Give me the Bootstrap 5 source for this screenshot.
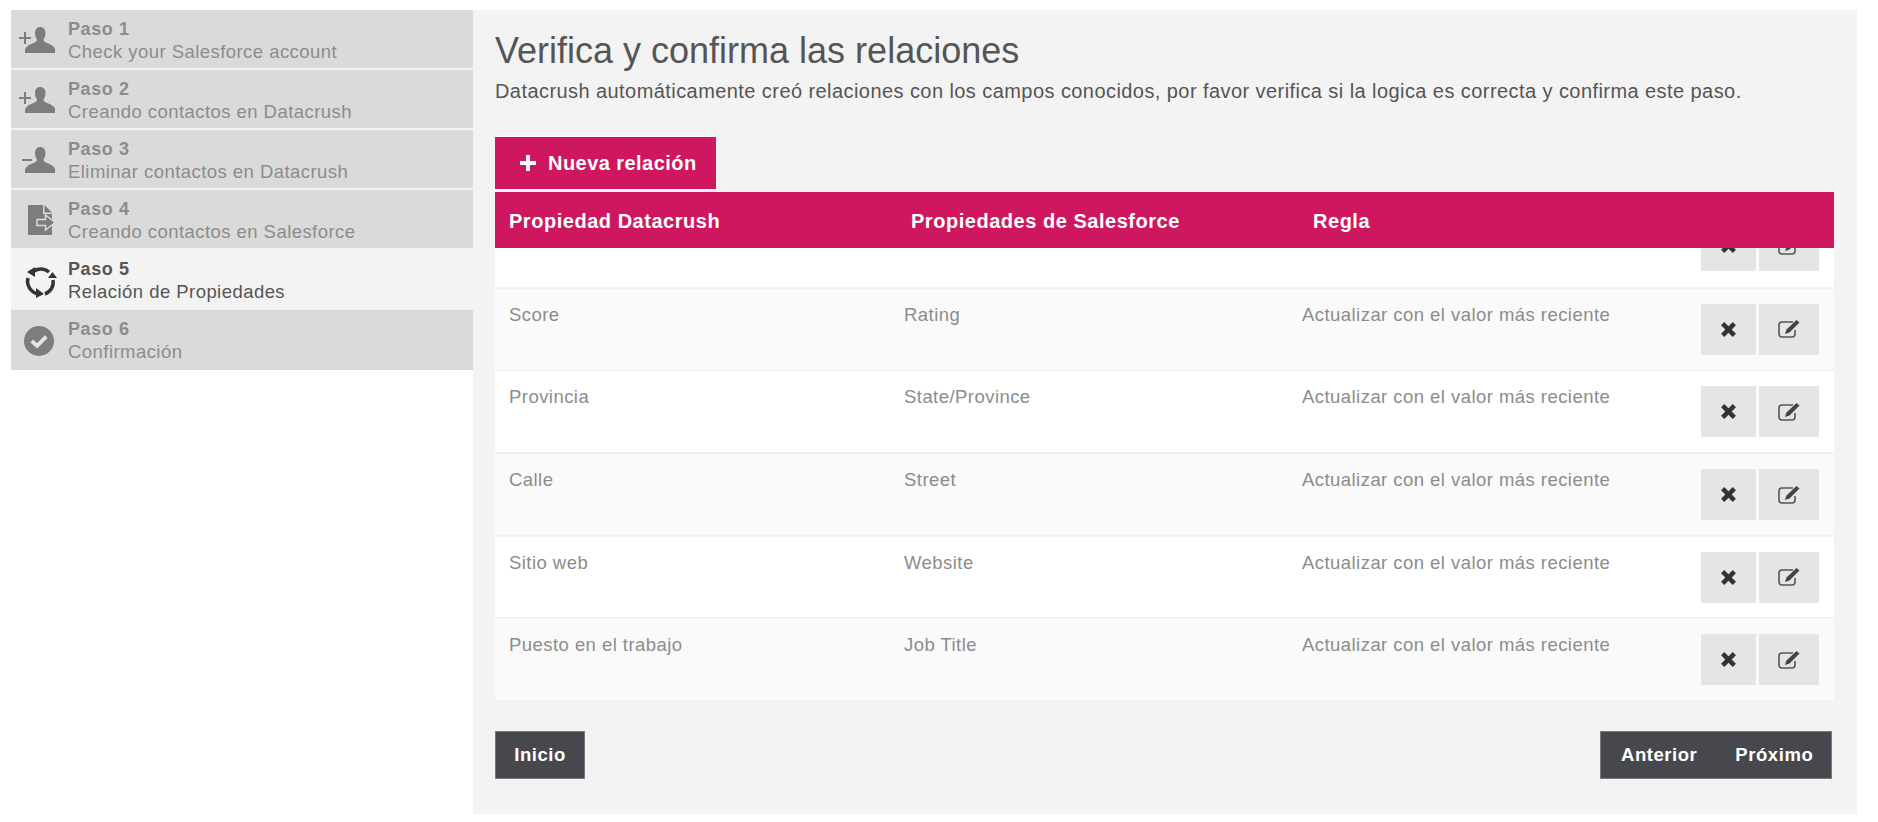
<!DOCTYPE html>
<html lang="es">
<head>
<meta charset="utf-8">
<title>Relaciones</title>
<link href="https://cdn.jsdelivr.net/npm/bootstrap@5.3.0/dist/css/bootstrap.min.css" rel="stylesheet">
<style>
body{font-family:"Liberation Sans",Arial,sans-serif;background:#fff;padding:10px 21px 0 11px;font-size:18.5px;letter-spacing:.45px;height:822px;overflow:hidden}
.side-col{width:462px;flex:none}
.step-row{height:60px;background:#dadada;border-bottom:2px solid #f3f3f3;color:#8c8c8c;padding:8px 0 0 0;line-height:23px}
.step-row:last-child{border-bottom:0}
.step-row.is-on{background:#f3f3f3;color:#555}
.step-icon{width:57px;flex:none;display:flex;padding:9px 0 0 8px}
.step-icon.alt-doc{padding:7px 0 0 17px}
.step-icon.alt-ring{padding:7px 0 0 13px}
.step-icon.alt-ok{padding:8px 0 0 13px}
.step-icon svg{display:block}
.step-name{font-weight:700;letter-spacing:.6px;font-size:18px;line-height:22px}
.main-col{width:1384px;height:804px;background:#f3f3f3;padding:18px 23px 0 22px}
.page-title{font-size:36px;font-weight:400;color:#555;margin:0;line-height:46px;letter-spacing:0}
.page-sub{color:#555;margin:4px 0 0;line-height:26px;font-size:20px;letter-spacing:.43px;white-space:nowrap}
.btn-pink{background:#ce175e;color:#fff;font-weight:700;border-radius:0;width:221px;height:52px;margin-top:33px;padding:0 0 0 25px;font-size:20px;border:0;display:flex;align-items:center;gap:12px;letter-spacing:.45px}
.btn-pink:hover{background:#ce175e;color:#fff}
.head-table,.body-table{table-layout:fixed;width:100%;margin:0}
.head-table{margin-top:3px}
.head-table th{background:#ce175e;color:#fff;height:56px;padding:1px 0 0 14px;border:0;vertical-align:middle;font-size:20px;letter-spacing:.53px;box-shadow:none}
.scroll-box{height:453px;overflow:hidden;background:#fff}
.body-table{margin-top:-43px}
.body-table td{height:82.7px;padding:15px 0 0 14px;color:#8c8c8c;border-bottom:2px solid #f1f1f1;box-shadow:none;vertical-align:top;line-height:22px;background:#fff}
.body-table tr:nth-child(even) td{background:#fafafa}
.tool-btn{background:#e5e5e5;border:0;border-radius:0;height:51px;padding:0;display:inline-flex;align-items:center;justify-content:center}
.tool-x{width:55px;margin-right:3px}
.tool-e{width:60px}
.foot-bar{margin-top:30px;padding-right:2px}
.btn-dark-sq{background:#47484d;color:#fff;font-weight:700;border-radius:0;height:48px;border:1px solid #77787c;font-size:18.500px;padding:0;letter-spacing:.55px}
.btn-dark-sq:hover{background:#47484d;color:#fff}
.btn-start{width:90px}
.btn-pair{width:232px;display:flex;align-items:center;gap:38px;padding:0 0 0 20px}
</style>
</head>
<body>
<svg width="0" height="0" class="position-absolute">
  <defs>
    <path id="bust" d="M21 0c3.500 0 5.500 2.500 5.500 6 0 2.500-.8 5-2 6.500 0 1.500 1 2.500 3.500 3.500 4 1.500 7.500 3 8.500 7v3H6v-3c1-4 4.500-5.500 8.500-7 2.500-1 3.500-2 3.500-3.500-1.200-1.500-2-4-2-6.500 0-3.500 2-6 5-6z"/>
    <symbol id="ico-x" viewBox="0 0 16 16"><path fill="#333" d="M4 1l4 4 4-4 3 3-4 4 4 4-3 3-4-4-4 4-3-3 4-4-4-4z"/></symbol>
    <symbol id="ico-e" viewBox="0 0 22 18"><path fill="none" stroke="#555" stroke-width="1.600" d="M15 2H4a3 3 0 0 0-3 3v9a3 3 0 0 0 3 3h10a3 3 0 0 0 3-3v-4"/><path fill="#444" d="M18.500 0l3 2.500-10 10-4.500 1.500 1.500-4.500z"/></symbol>
  </defs>
</svg>
<div class="d-flex">
  <div class="side-col">
    <div class="step-row d-flex"><div class="step-icon"><svg width="36" height="26" viewBox="0 0 36 26"><path fill="#7d7d7d" d="M0 10h5V5h2v5h5v2H7v5H5v-5H0z"/><use href="#bust" fill="#7d7d7d"/></svg></div><div><div class="step-name">Paso 1</div><div>Check your Salesforce account</div></div></div>
    <div class="step-row d-flex"><div class="step-icon"><svg width="36" height="26" viewBox="0 0 36 26"><path fill="#7d7d7d" d="M0 10h5V5h2v5h5v2H7v5H5v-5H0z"/><use href="#bust" fill="#7d7d7d"/></svg></div><div><div class="step-name">Paso 2</div><div>Creando contactos en Datacrush</div></div></div>
    <div class="step-row d-flex"><div class="step-icon"><svg width="36" height="26" viewBox="0 0 36 26"><path fill="#7d7d7d" d="M3 12h10v2H3z"/><use href="#bust" fill="#7d7d7d"/></svg></div><div><div class="step-name">Paso 3</div><div>Eliminar contactos en Datacrush</div></div></div>
    <div class="step-row d-flex"><div class="step-icon alt-doc"><svg width="29" height="31" viewBox="0 0 29 31"><path fill="#7d7d7d" d="M0 0h15v9h9v21H0z"/><path fill="#7d7d7d" d="M16.500 0l7.500 7.500h-7.500z"/><path fill="#7d7d7d" stroke="#dadada" stroke-width="1.500" d="M9 14.500h8.500V10L27 17.500 17.500 25v-4.500H9z"/></svg></div><div><div class="step-name">Paso 4</div><div>Creando contactos en Salesforce</div></div></div>
    <div class="step-row is-on d-flex"><div class="step-icon alt-ring"><svg width="34" height="34" viewBox="0 0 34 34" fill="none"><path stroke="#333" stroke-width="3.500" d="M10 6A12.500 12.500 0 0 1 25 7M29 15A12.500 12.500 0 0 1 21 29M4 13A13 13 0 0 0 14 29"/><path fill="#333" d="M3 7l8-5v10zM24 13h9l-4.500-6zM12 23v10l8-4z"/></svg></div><div><div class="step-name">Paso 5</div><div>Relación de Propiedades</div></div></div>
    <div class="step-row d-flex"><div class="step-icon alt-ok"><svg width="30" height="30" viewBox="0 0 31 31"><circle cx="15.500" cy="15.500" r="15.500" fill="#7d7d7d"/><path fill="none" stroke="#e4e4e4" stroke-width="4" d="M8 15.500l5.500 5 9.500-9.500"/></svg></div><div><div class="step-name">Paso 6</div><div>Confirmación</div></div></div>
  </div>
  <div class="main-col">
    <h1 class="page-title">Verifica y confirma las relaciones</h1>
    <p class="page-sub">Datacrush automáticamente creó relaciones con los campos conocidos, por favor verifica si la logica es correcta y confirma este paso.</p>
    <button class="btn btn-pink" type="button"><svg width="16" height="16" viewBox="0 0 16 16"><path fill="#fff" d="M6 0h4v6h6v4h-6v6H6v-6H0V6h6z"/></svg>Nueva relación</button>
    <table class="table head-table">
      <colgroup><col style="width:402px"><col style="width:402px"><col></colgroup>
      <thead><tr><th>Propiedad Datacrush</th><th>Propiedades de Salesforce</th><th>Regla</th></tr></thead>
    </table>
    <div class="scroll-box">
      <table class="table body-table">
        <colgroup><col style="width:395px"><col style="width:398px"><col style="width:399px"><col></colgroup>
        <tbody>
          <tr><td></td><td></td><td></td><td><div class="d-flex"><button class="btn tool-btn tool-x" type="button"><svg width="17" height="17"><use href="#ico-x"/></svg></button><button class="btn tool-btn tool-e" type="button"><svg width="22" height="18"><use href="#ico-e"/></svg></button></div></td></tr>
          <tr><td>Score</td><td>Rating</td><td>Actualizar con el valor más reciente</td><td><div class="d-flex"><button class="btn tool-btn tool-x" type="button"><svg width="17" height="17"><use href="#ico-x"/></svg></button><button class="btn tool-btn tool-e" type="button"><svg width="22" height="18"><use href="#ico-e"/></svg></button></div></td></tr>
          <tr><td>Provincia</td><td>State/Province</td><td>Actualizar con el valor más reciente</td><td><div class="d-flex"><button class="btn tool-btn tool-x" type="button"><svg width="17" height="17"><use href="#ico-x"/></svg></button><button class="btn tool-btn tool-e" type="button"><svg width="22" height="18"><use href="#ico-e"/></svg></button></div></td></tr>
          <tr><td>Calle</td><td>Street</td><td>Actualizar con el valor más reciente</td><td><div class="d-flex"><button class="btn tool-btn tool-x" type="button"><svg width="17" height="17"><use href="#ico-x"/></svg></button><button class="btn tool-btn tool-e" type="button"><svg width="22" height="18"><use href="#ico-e"/></svg></button></div></td></tr>
          <tr><td>Sitio web</td><td>Website</td><td>Actualizar con el valor más reciente</td><td><div class="d-flex"><button class="btn tool-btn tool-x" type="button"><svg width="17" height="17"><use href="#ico-x"/></svg></button><button class="btn tool-btn tool-e" type="button"><svg width="22" height="18"><use href="#ico-e"/></svg></button></div></td></tr>
          <tr><td>Puesto en el trabajo</td><td>Job Title</td><td>Actualizar con el valor más reciente</td><td><div class="d-flex"><button class="btn tool-btn tool-x" type="button"><svg width="17" height="17"><use href="#ico-x"/></svg></button><button class="btn tool-btn tool-e" type="button"><svg width="22" height="18"><use href="#ico-e"/></svg></button></div></td></tr>
        </tbody>
      </table>
    </div>
    <div class="foot-bar d-flex justify-content-between">
      <button class="btn btn-dark-sq btn-start" type="button">Inicio</button>
      <div class="btn btn-dark-sq btn-pair"><span>Anterior</span><span>Próximo</span></div>
    </div>
  </div>
</div>
<script src="https://cdn.jsdelivr.net/npm/bootstrap@5.3.0/dist/js/bootstrap.bundle.min.js"></script>
</body>
</html>
